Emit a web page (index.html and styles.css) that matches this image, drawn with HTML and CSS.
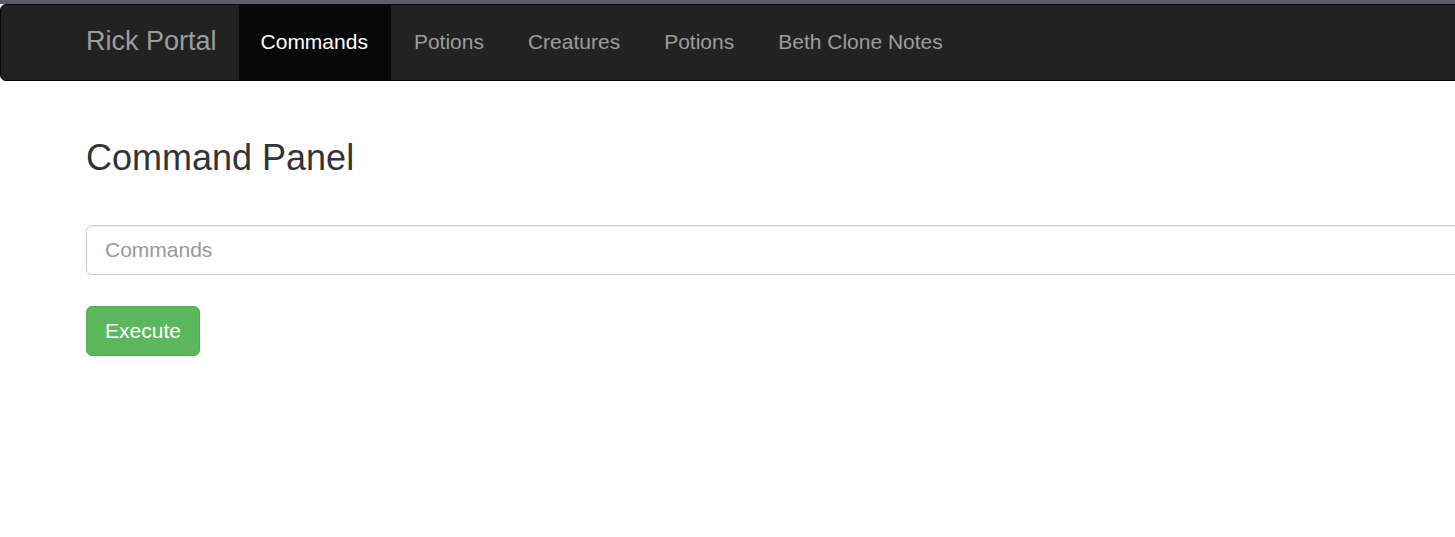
FILE: index.html
```html
<!DOCTYPE html>
<html lang="en">
<head>
<meta charset="UTF-8" />
<title>Rick Portal - Commands</title>
<link rel="stylesheet" href="styles.css">
</head>
<body>

<div class="topstrip"></div>

<nav class="navbar">
  <a class="brand" href="#">Rick Portal</a>
  <a class="active" href="#">Commands</a>
  <a href="#">Potions</a>
  <a href="#">Creatures</a>
  <a href="#">Potions</a>
  <a href="#">Beth Clone Notes</a>
</nav>

<div class="container">
  <h3>Command Panel</h3>
  <form>
    <input type="text" class="form-control" placeholder="Commands" />
    <button type="button" class="btn-success">Execute</button>
  </form>
</div>

</body>
</html>
```

FILE: styles.css
```css
html, body {
  margin: 0; padding: 0;
  overflow: hidden;
}
body {
  font-family: 'Liberation Sans', Arial, sans-serif;
  font-size: 21px;
  color: #333;
  background: #fff;
  width: 1455px;
  height: 537px;
}
.topstrip {
  height: 4px;
  background: #5a5d6e;
}
.navbar {
  display: flex;
  width: 1700px;
  height: 75px;
  background: #222;
  border: 1px solid #080808;
  border-radius: 6px 0 0 6px;
  padding-left: 63px;
}
.navbar a {
  display: block;
  padding: 0 22px 2px;
  line-height: 73px;
  color: #9d9d9d;
  text-decoration: none;
}
.navbar a.brand {
  font-size: 27px;
}
.navbar a.active {
  background: #080808;
  color: #fff;
  padding-right: 23px;
  margin-right: 1px;
}
.container {
  width: 1630px;
  padding-left: 86px;
}
h3 {
  font-size: 36px;
  font-weight: 500;
  line-height: 40px;
  margin: 57px 0 47px;
}
.form-control {
  display: block;
  box-sizing: border-box;
  width: 100%;
  height: 50px;
  padding: 0 18px;
  font-family: inherit;
  font-size: 21px;
  color: #555;
  border: 1px solid #ccc;
  border-radius: 6px;
  box-shadow: inset 0 1px 1px rgba(0,0,0,0.075);
  margin: 0 0 31px;
}
.form-control::placeholder {
  color: #999;
}
.btn-success {
  display: block;
  box-sizing: border-box;
  height: 50px;
  width: 114px;
  padding: 0;
  font-family: inherit;
  font-size: 21px;
  color: #fff;
  background: #5cb85c;
  border: 1px solid #4cae4c;
  border-radius: 6px;
  cursor: pointer;
}
```
